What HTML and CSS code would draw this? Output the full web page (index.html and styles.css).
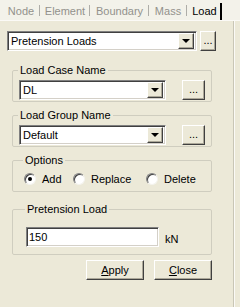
FILE: index.html
```html
<!DOCTYPE html>
<html lang="en">
<head>
    <meta charset="UTF-8">
    <title>Load</title>
    <link rel="stylesheet" href="styles.css">
</head>
<body>
    <div class="tabs">
        <span class="tab tab-node">Node</span>
        <span class="tab tab-element">Element</span>
        <span class="tab tab-boundary">Boundary</span>
        <span class="tab tab-mass">Mass</span>
        <span class="tab tab-load active">Load</span>
    </div>

    <div class="panel">
        <div class="row top-row">
            <div class="combo combo-wide">
                <span class="combo-text">Pretension Loads</span>
                <span class="drop"><span class="arrow"></span></span>
            </div>
            <button class="btn btn-dots small">...</button>
        </div>

        <fieldset class="group group-case">
            <legend>Load Case Name</legend>
            <div class="row">
                <div class="combo combo-mid">
                    <span class="combo-text">DL</span>
                    <span class="drop"><span class="arrow"></span></span>
                </div>
                <button class="btn btn-dots">...</button>
            </div>
        </fieldset>

        <fieldset class="group group-load">
            <legend>Load Group Name</legend>
            <div class="row">
                <div class="combo combo-mid">
                    <span class="combo-text">Default</span>
                    <span class="drop"><span class="arrow"></span></span>
                </div>
                <button class="btn btn-dots">...</button>
            </div>
        </fieldset>

        <fieldset class="group group-options">
            <legend>Options</legend>
            <div class="radios">
                <label class="radio radio-add"><span class="dot checked"></span>Add</label>
                <label class="radio radio-replace"><span class="dot"></span>Replace</label>
                <label class="radio radio-delete"><span class="dot"></span>Delete</label>
            </div>
        </fieldset>

        <fieldset class="group group-pretension">
            <legend>Pretension Load</legend>
            <div class="row value-row">
                <div class="textbox">150</div>
                <span class="unit">kN</span>
            </div>
        </fieldset>

        <div class="actions">
            <button class="btn btn-action"><u>A</u>pply</button>
            <button class="btn btn-action"><u>C</u>lose</button>
        </div>
    </div>
</body>
</html>
```

FILE: styles.css
```css
body {
    margin: 0;
    width: 240px;
    height: 307px;
    overflow: hidden;
    background-color: #ece9d8;
    font-family: "Liberation Sans", Arial, sans-serif;
    font-size: 11px;
    color: #000;
}
.tabs {
    display: flex;
    height: 20px;
    padding-left: 2px;
    background-color: #f3f2ea;
    border-bottom: 1px solid #fbfaf6;
}
.tab {
    position: relative;
    display: flex;
    align-items: center;
    justify-content: center;
    color: #92918c;
    font-size: 11px;
    padding-top: 1px;
}
.tab::after {
    content: "";
    position: absolute;
    right: 0;
    top: 5px;
    height: 11px;
    width: 1px;
    background-color: #aeada8;
}
.tab-node { width: 38px; }
.tab-element { width: 50px; }
.tab-boundary { width: 59px; }
.tab-mass { width: 38px; }
.tab-load { width: 35px; }
.tab.active {
    color: #000;
}
.tab.active::after {
    top: 3px;
    height: 17px;
    width: 2px;
    background-color: #000;
}
.panel {
    width: 234px;
    height: 286px;
    padding: 10px 0 0 7px;
    box-sizing: border-box;
    border-right: 1px solid #c9c6b6;
    box-shadow: 1px 0 0 #fbfaf6;
}
.row {
    display: flex;
    align-items: center;
}
.top-row {
    height: 20px;
    gap: 3px;
}
.combo {
    display: flex;
    align-items: center;
    box-sizing: border-box;
    height: 20px;
    background-color: #fff;
    border-top: 1px solid #808080;
    border-left: 1px solid #808080;
    border-bottom: 1px solid #fff;
    border-right: 1px solid #fff;
    box-shadow: inset 1px 1px 0 #404040, inset -1px -1px 0 #d4d0c8;
    padding: 2px;
}
.combo-wide { width: 190px; }
.combo-mid { width: 147px; }
.combo-text {
    flex: 1;
    padding-left: 1px;
    white-space: nowrap;
}
.drop {
    display: flex;
    align-items: center;
    justify-content: center;
    width: 16px;
    height: 16px;
    box-sizing: border-box;
    background-color: #ece9d8;
    border-top: 1px solid #fff;
    border-left: 1px solid #fff;
    border-right: 1px solid #404040;
    border-bottom: 1px solid #404040;
    box-shadow: inset -1px -1px 0 #aca899;
}
.arrow {
    width: 0;
    height: 0;
    border-left: 4px solid transparent;
    border-right: 4px solid transparent;
    border-top: 4px solid #000;
}
.btn {
    box-sizing: border-box;
    height: 20px;
    margin: 0;
    padding: 0;
    background-color: #ece9d8;
    font-family: inherit;
    font-size: 11px;
    color: #000;
    border-top: 1px solid #fff;
    border-left: 1px solid #fff;
    border-right: 1px solid #404040;
    border-bottom: 1px solid #404040;
    box-shadow: inset -1px -1px 0 #aca899;
}
.btn-dots {
    width: 23px;
    margin-left: 16px;
    padding-bottom: 2px;
}
.btn-dots.small {
    width: 16px;
    margin-left: 0;
}
.group {
    margin: 0 3px 0 5px;
    padding: 3px 6px 1px 6px;
    border: 1px solid #cfcdbf;
    border-radius: 2px;
    min-width: 0;
    width: 200px;
    box-sizing: border-box;
}
.group legend {
    padding: 0 2px;
    margin-left: -1px;
    line-height: 13px;
    font-size: 11px;
}
.group-case { margin-top: 13px; }
.group-load { margin-top: 7px; }
.group-options {
    margin-top: 7px;
    padding: 5px 0 6px 11px;
}
.radios {
    display: flex;
    height: 13px;
    align-items: center;
}
.radio {
    display: flex;
    align-items: center;
    gap: 6px;
}
.radio-add { width: 49px; }
.radio-replace { width: 73px; }
.dot {
    display: flex;
    align-items: center;
    justify-content: center;
    width: 12px;
    height: 12px;
    box-sizing: border-box;
    border-radius: 50%;
    background-color: #fff;
    border-top: 1px solid #808080;
    border-left: 1px solid #808080;
    border-right: 1px solid #f4f3ee;
    border-bottom: 1px solid #f4f3ee;
    box-shadow: inset 1px 1px 0 #404040;
}
.dot.checked::after {
    content: "";
    width: 4px;
    height: 4px;
    border-radius: 50%;
    background-color: #000;
}
.group-pretension {
    margin-top: 11px;
    padding: 11px 6px 7px 13px;
}
.value-row {
    gap: 6px;
}
.textbox {
    box-sizing: border-box;
    width: 133px;
    height: 20px;
    padding: 3px 2px;
    background-color: #fff;
    border-top: 1px solid #808080;
    border-left: 1px solid #808080;
    border-bottom: 1px solid #fff;
    border-right: 1px solid #fff;
    box-shadow: inset 1px 1px 0 #404040, inset -1px -1px 0 #d4d0c8;
}
.unit {
    padding-top: 3px;
}
.actions {
    display: flex;
    justify-content: flex-end;
    gap: 10px;
    width: 205px;
    margin-top: 5px;
}
.btn-action {
    width: 58px;
}
```
